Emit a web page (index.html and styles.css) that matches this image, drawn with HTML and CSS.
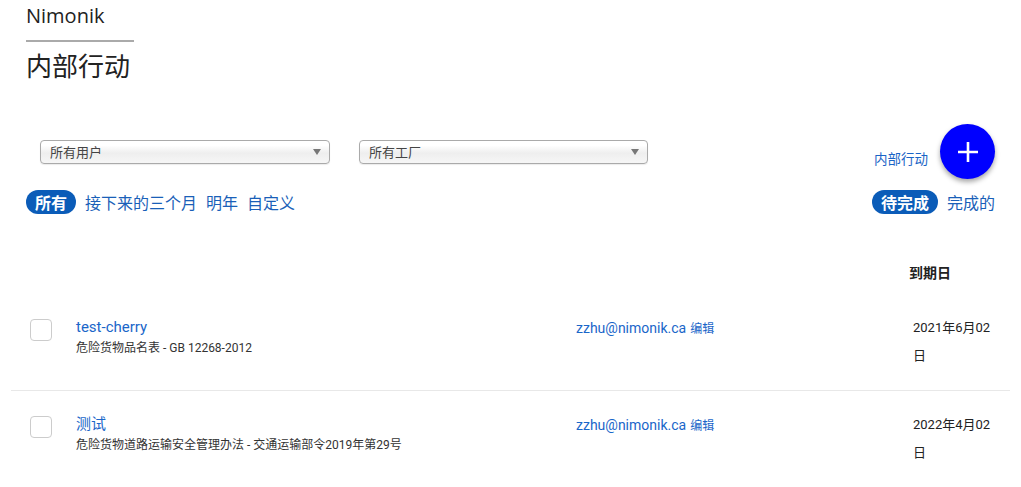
FILE: index.html
```html
<!DOCTYPE html>
<html lang="zh">
<head>
    <meta charset="UTF-8">
    <meta name="viewport" content="width=device-width, initial-scale=1.0">
    <title>内部行动 - Nimonik</title>
    <link rel="stylesheet" href="styles.css">
</head>
<body>
    <div class="page">
        <div class="brand">Nimonik</div>
        <h1 class="page-title">内部行动</h1>

        <div class="toolbar">
            <div class="filters">
                <span class="select-wrap wide">
                    <select class="filter-select">
                        <option>所有用户</option>
                    </select>
                </span>
                <span class="select-wrap">
                    <select class="filter-select">
                        <option>所有工厂</option>
                    </select>
                </span>
            </div>
            <div class="create">
                <a class="create-label" href="#">内部行动</a>
                <button class="fab" type="button" aria-label="新建">
                    <svg width="22" height="22" viewBox="0 0 22 22">
                        <path d="M11 1v20M1 11h20" stroke="#fff" stroke-width="2.6" fill="none"/>
                    </svg>
                </button>
            </div>
        </div>

        <div class="tabs-row">
            <div class="tabs">
                <a class="tab active" href="#">所有</a>
                <a class="tab" href="#">接下来的三个月</a>
                <a class="tab" href="#">明年</a>
                <a class="tab" href="#">自定义</a>
            </div>
            <div class="tabs">
                <a class="tab active" href="#">待完成</a>
                <a class="tab" href="#">完成的</a>
            </div>
        </div>

        <div class="actions">
            <div class="actions-head">
                <span></span>
                <span></span>
                <span></span>
                <span class="head-due">到期日</span>
            </div>

            <div class="action-row">
                <div class="cell-check"><input type="checkbox" class="check"></div>
                <div class="cell-title">
                    <a class="action-title" href="#">test-cherry</a>
                    <div class="action-source">危险货物品名表 - GB 12268-2012</div>
                </div>
                <div class="cell-owner">
                    <a href="#" class="owner">zzhu@nimonik.ca</a> <a href="#" class="edit">编辑</a>
                </div>
                <div class="cell-due"><span class="due">2021年6月02日</span></div>
            </div>

            <div class="action-row">
                <div class="cell-check"><input type="checkbox" class="check"></div>
                <div class="cell-title">
                    <a class="action-title" href="#">测试</a>
                    <div class="action-source">危险货物道路运输安全管理办法 - 交通运输部令2019年第29号</div>
                </div>
                <div class="cell-owner">
                    <a href="#" class="owner">zzhu@nimonik.ca</a> <a href="#" class="edit">编辑</a>
                </div>
                <div class="cell-due"><span class="due">2022年4月02日</span></div>
            </div>
        </div>
    </div>
</body>
</html>
```

FILE: styles.css
```css
body {
    margin: 0;
    background: #fff;
    color: #222;
    font-family: Roboto, "Noto Sans CJK SC", sans-serif;
}
a {
    text-decoration: none;
}
.page {
    padding: 4px 26px 0 26px;
}
.brand {
    display: inline-block;
    width: 108px;
    font-family: "Open Sans", "Noto Sans CJK SC", sans-serif;
    font-size: 20px;
    line-height: 24px;
    color: #222;
    padding-bottom: 12px;
    border-bottom: 2px solid #aaa;
}
.page-title {
    margin: 6px 0 0 0;
    font-family: "Noto Sans CJK SC", sans-serif;
    font-weight: 400;
    font-size: 26px;
    line-height: 34px;
    color: #222;
}

/* filters + create button */
.toolbar {
    display: flex;
    justify-content: space-between;
    align-items: center;
    margin-top: 42px;
}
.filters {
    display: flex;
    gap: 29px;
    padding-left: 14px;
}
.select-wrap {
    position: relative;
    display: block;
    width: 289px;
}
.select-wrap.wide {
    width: 290px;
}
.select-wrap::after {
    content: "";
    position: absolute;
    right: 9px;
    top: 9px;
    border-left: 4px solid transparent;
    border-right: 4px solid transparent;
    border-top: 6px solid #777;
}
.filter-select {
    appearance: none;
    -webkit-appearance: none;
    display: block;
    width: 100%;
    height: 24px;
    padding: 0 9px;
    border: 1px solid #aaa;
    border-radius: 4px;
    background: linear-gradient(to bottom, #fff 20%, #eee 55%, #f6f6f6 100%);
    box-shadow: 0 1px 1px rgba(0, 0, 0, 0.08);
    font-family: "Noto Sans CJK SC", sans-serif;
    font-size: 13px;
    color: #444;
    outline: none;
}
.create {
    display: flex;
    align-items: center;
    gap: 12px;
}
.create-label {
    font-family: "Noto Sans CJK SC", sans-serif;
    font-size: 13.5px;
    color: #1a64c6;
    margin-top: 13px;
}
.fab {
    width: 55px;
    height: 55px;
    border-radius: 50%;
    border: none;
    background: #0000ff;
    box-shadow: 0 3px 5px rgba(0, 0, 0, 0.35);
    display: flex;
    align-items: center;
    justify-content: center;
    padding: 0;
    cursor: pointer;
}

/* date / status tabs */
.tabs-row {
    display: flex;
    justify-content: space-between;
    margin-top: 11px;
}
.tabs {
    display: flex;
    align-items: center;
    gap: 9px;
}
.tab {
    font-family: "Noto Sans CJK SC", sans-serif;
    font-size: 16px;
    line-height: 24px;
    color: #1a5fb8;
}
.tab.active {
    background: #0b5cb8;
    color: #fff;
    font-weight: 700;
    padding: 0 9px;
    border-radius: 12px;
}

/* action list */
.actions {
    margin: 44px -15px 0 -15px;
}
.actions-head,
.action-row {
    display: grid;
    grid-template-columns: 57px 500px 337px 105px;
}
.actions-head {
    padding: 4px 0 12px 0;
}
.head-due {
    padding-left: 4px;
    font-family: "Noto Sans CJK SC", sans-serif;
    font-size: 14px;
    font-weight: 700;
    line-height: 20px;
    color: #222;
}
.action-row {
    align-items: start;
    padding: 20px 0;
    border-bottom: 1px solid #e8e8e8;
}
.action-row:last-child {
    border-bottom: none;
}
.cell-check {
    padding: 5px 0 0 19px;
}
.check {
    appearance: none;
    -webkit-appearance: none;
    display: block;
    margin: 0;
    width: 22px;
    height: 22px;
    border: 1px solid #ccc;
    border-radius: 4px;
    background: #fff;
}
.cell-title {
    padding: 3px 8px 0 8px;
}
.action-title {
    display: block;
    font-size: 15px;
    line-height: 20px;
    color: #1a66c9;
}
.action-source {
    margin-top: 2px;
    font-size: 12px;
    line-height: 18px;
    color: #333;
    white-space: nowrap;
}
.cell-owner {
    padding-left: 8px;
    line-height: 28px;
}
.owner {
    font-size: 14px;
    color: #1a66c9;
}
.edit {
    font-size: 12px;
    color: #1a66c9;
}
.cell-due {
    padding-left: 8px;
}
.due {
    display: block;
    width: 80px;
    font-size: 13px;
    line-height: 28px;
    color: #222;
    word-break: break-all;
}
```
